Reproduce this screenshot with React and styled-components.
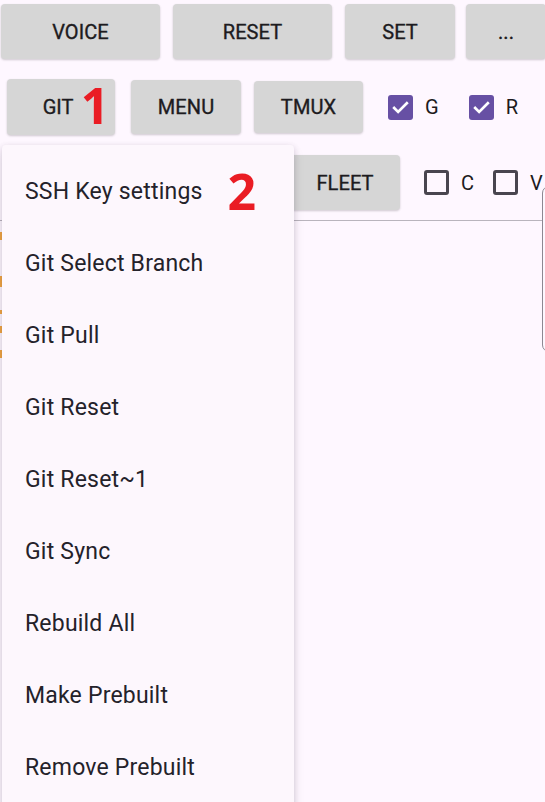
import React from 'react';
import styled, { createGlobalStyle } from 'styled-components';

const GlobalStyle = createGlobalStyle`
  html, body {
    margin: 0;
    padding: 0;
    background: #fef7ff;
    overflow: hidden;
  }
  body {
    font-family: Roboto, 'Noto Sans', sans-serif;
    color: #1d1b20;
  }
`;

const Page = styled.div`
  position: relative;
  width: 545px;
  height: 802px;
  overflow: hidden;
  background: #fef7ff;
`;

const Toolbar = styled.div`
  display: flex;
  align-items: center;
  gap: 13px;
  padding-left: ${props => props.indent || 0}px;
  margin-top: ${props => props.top || 0}px;
  height: ${props => props.height || 56}px;
  white-space: nowrap;
`;

const Button = styled.div`
  box-sizing: border-box;
  flex: none;
  width: ${props => props.w}px;
  height: ${props => props.h || 55}px;
  margin-left: ${props => props.ml || 0}px;
  background: #d6d6d6;
  border-radius: 4px;
  box-shadow: 0 1px 2px rgba(0, 0, 0, 0.12), 0 1px 3px rgba(0, 0, 0, 0.08);
  display: flex;
  align-items: center;
  justify-content: center;
  font-size: 20px;
  font-weight: 400;
  -webkit-text-stroke: 0.35px #1d1b20;
  letter-spacing: 0.1px;
  color: #1d1b20;
  text-transform: uppercase;
`;

const CheckItem = styled.div`
  display: flex;
  align-items: center;
  gap: 12px;
  flex: none;
  margin-left: ${props => props.ml || 0}px;
  font-size: 20px;
  color: #1d1b20;
`;

const Box = styled.div`
  box-sizing: border-box;
  width: 25px;
  height: 25px;
  border-radius: 3px;
  display: flex;
  align-items: center;
  justify-content: center;
  background: ${props => (props.checked ? '#6750a4' : 'transparent')};
  border: ${props => (props.checked ? 'none' : '3px solid #49454f')};
`;

const Divider = styled.div`
  margin-top: 10px;
  height: 1px;
  background: #b9b4bd;
`;

const Marker = styled.span`
  font-family: 'Noto Sans', 'Open Sans', sans-serif;
  font-weight: 700;
  font-size: 50px;
  line-height: 1;
  color: #ea1c24;
  -webkit-text-stroke: 0;
`;

const Menu = styled.div`
  position: absolute;
  left: 2px;
  top: 145px;
  width: 292px;
  height: 700px;
  box-sizing: border-box;
  padding-top: 10px;
  background: #fdf7fd;
  border-radius: 4px 4px 0 0;
  box-shadow: 0 2px 6px rgba(60, 40, 70, 0.18), 0 6px 12px rgba(60, 40, 70, 0.1);
`;

const MenuItem = styled.div`
  height: 72px;
  display: flex;
  align-items: center;
  gap: 25px;
  padding-left: 23px;
  font-size: 23px;
  letter-spacing: 0.2px;
  color: #24222a;
`;

const SidePanel = styled.div`
  position: absolute;
  left: 542px;
  top: 186px;
  width: 20px;
  height: 164px;
  border: 1px solid #8d8892;
  border-radius: 7px;
  background: #fef7ff;
`;

const EdgeMarks = styled.svg`
  position: absolute;
  left: 0;
  top: 228px;
`;

const Check = () => (
  <svg width="19" height="19" viewBox="0 0 24 24">
    <path d="M4 12.5l5 5L20 6.5" fill="none" stroke="#fff" strokeWidth="3.4" strokeLinecap="square" />
  </svg>
);

const Checkbox = ({ label, checked, ml }) => (
  <CheckItem ml={ml}>
    <Box checked={checked}>{checked && <Check />}</Box>
    <span>{label}</span>
  </CheckItem>
);

const items = [
  'SSH Key settings',
  'Git Select Branch',
  'Git Pull',
  'Git Reset',
  'Git Reset~1',
  'Git Sync',
  'Rebuild All',
  'Make Prebuilt',
  'Remove Prebuilt',
];

export default function App() {
  return (
    <Page>
      <GlobalStyle />
      <Toolbar indent={1} top={4} height={55}>
        <Button w={159}>Voice</Button>
        <Button w={159}>Reset</Button>
        <Button w={110}>Set</Button>
        <Button w={80} ml={-2}>...</Button>
      </Toolbar>
      <Toolbar indent={7} top={20} height={56}>
        <Button w={108} h={56}>
          <span style={{ marginLeft: 30 }}>Git</span>
          <Marker style={{ marginLeft: 7, marginTop: -4 }}>1</Marker>
        </Button>
        <Button w={110} h={54} ml={3}>Menu</Button>
        <Button w={109} h={52}>Tmux</Button>
        <Checkbox label="G" checked ml={12} />
        <Checkbox label="R" checked ml={17} />
      </Toolbar>
      <Toolbar indent={290} top={20} height={55}>
        <Button w={110} h={55}>Fleet</Button>
        <Checkbox label="C" ml={11} />
        <Checkbox label="V" ml={6} />
      </Toolbar>
      <Divider />
      <EdgeMarks width="3" height="140">
        <rect x="0" y="4" width="2" height="8" fill="#f2a640" />
        <rect x="0" y="48" width="2" height="11" fill="#f2a640" />
        <rect x="0" y="82" width="2" height="4" fill="#f2a640" />
        <rect x="0" y="98" width="2" height="7" fill="#f2a640" />
        <rect x="0" y="122" width="2" height="8" fill="#f2a640" />
      </EdgeMarks>
      <SidePanel />
      <Menu>
        {items.map((label, i) => (
          <MenuItem key={label}>
            <span>{label}</span>
            {i === 0 && <Marker>2</Marker>}
          </MenuItem>
        ))}
      </Menu>
    </Page>
  );
}
